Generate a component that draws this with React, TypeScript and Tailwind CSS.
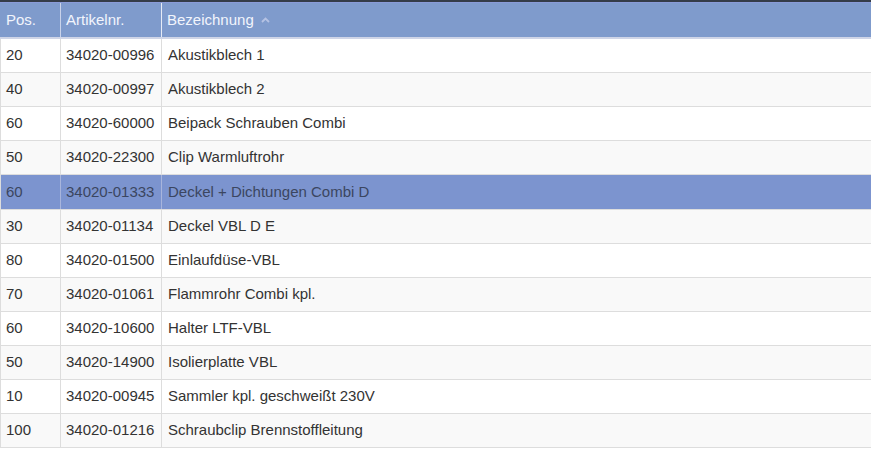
const rows = [
  { pos: "20", nr: "34020-00996", name: "Akustikblech 1" },
  { pos: "40", nr: "34020-00997", name: "Akustikblech 2" },
  { pos: "60", nr: "34020-60000", name: "Beipack Schrauben Combi" },
  { pos: "50", nr: "34020-22300", name: "Clip Warmluftrohr" },
  { pos: "60", nr: "34020-01333", name: "Deckel + Dichtungen Combi D", selected: true },
  { pos: "30", nr: "34020-01134", name: "Deckel VBL D E" },
  { pos: "80", nr: "34020-01500", name: "Einlaufdüse-VBL" },
  { pos: "70", nr: "34020-01061", name: "Flammrohr Combi kpl." },
  { pos: "60", nr: "34020-10600", name: "Halter LTF-VBL" },
  { pos: "50", nr: "34020-14900", name: "Isolierplatte VBL" },
  { pos: "10", nr: "34020-00945", name: "Sammler kpl. geschweißt 230V" },
  { pos: "100", nr: "34020-01216", name: "Schraubclip Brennstoffleitung" },
];

export default function App() {
  return (
    <div className="w-[871px] h-[456px] overflow-hidden bg-white font-['Liberation_Sans',Arial,sans-serif] text-[15px]">
      <div className="h-[2px] bg-[#343c48]" />
      {/* header */}
      <div className="flex h-[35px] bg-[#7f9bcc] text-[#f2f5fc] border-t border-[#8a9bd8]">
        <div className="w-[61px] border-r border-[#c9d3ea] pl-[6px] flex items-center">Pos.</div>
        <div className="w-[101px] border-r border-[#e6ebf6] pl-[5px] flex items-center">Artikelnr.</div>
        <div className="flex-1 pl-[5px] flex items-center gap-[7px]">
          Bezeichnung
          <svg width="9" height="6" viewBox="0 0 9 6" className="mt-[-1px]">
            <path d="M1 5 L4.5 1.5 L8 5" fill="none" stroke="#b5c2e3" strokeWidth="1.8" />
          </svg>
        </div>
      </div>
      <div className="h-[2px] bg-[#cfd5e7]" />
      {/* body */}
      <div className="border-l border-[#dddddd]">
        {rows.map((r, i) => (
          <div
            key={i}
            className={
              r.selected
                ? "flex h-[35px] bg-[#7c94cf] text-[#3b4660] border-b border-[#dddddd]"
                : i % 2 === 0
                ? "flex h-[34px] bg-white text-[#333333] border-b border-[#dddddd]"
                : "flex h-[34px] bg-[#f9f9f9] text-[#333333] border-b border-[#dddddd]"
            }
          >
            <div className={r.selected ? "w-[60px] border-r border-[#a8b5dc] pl-[5px] flex items-center" : "w-[60px] border-r border-[#dddddd] pl-[5px] flex items-center"}>{r.pos}</div>
            <div className={r.selected ? "w-[101px] border-r border-[#a8b5dc] pl-[5px] flex items-center" : "w-[101px] border-r border-[#dddddd] pl-[5px] flex items-center"}>{r.nr}</div>
            <div className="flex-1 pl-[6px] flex items-center">{r.name}</div>
          </div>
        ))}
      </div>
    </div>
  );
}
